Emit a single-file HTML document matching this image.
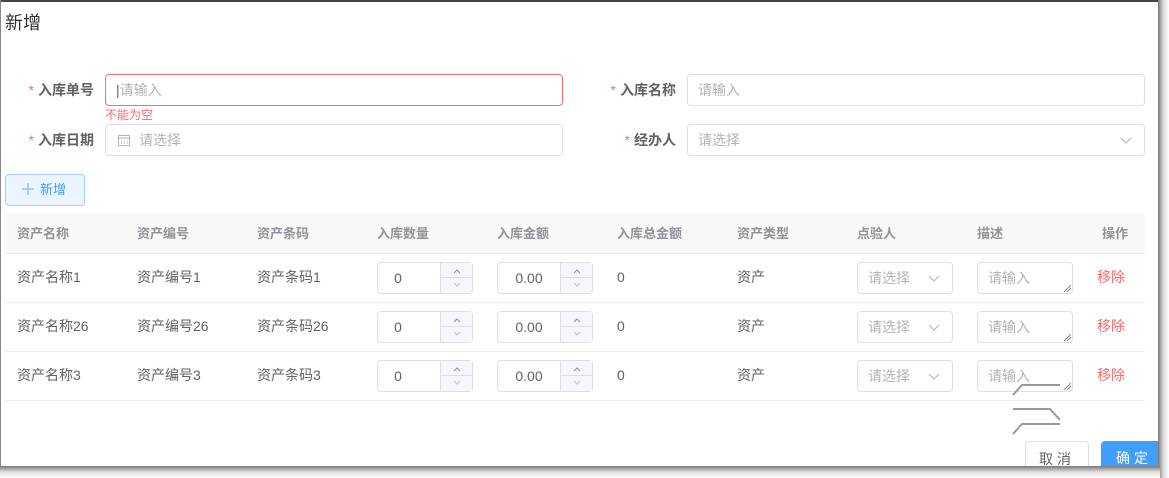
<!DOCTYPE html><html><head><meta charset="utf-8"><style>
*{box-sizing:border-box;margin:0;padding:0}
body{width:1169px;height:478px;background:#fff;font-family:"Liberation Sans","Noto Sans CJK SC",sans-serif;font-size:14px;color:#606266;position:relative;overflow:hidden}
.a{position:absolute}
.inp{position:absolute;border:1px solid #dcdfe6;border-radius:4px;background:#fff;color:#b0b3b9;font-size:14px;line-height:30px;padding-left:10px}
.lbl{position:absolute;font-weight:bold;color:#606266;text-align:right;line-height:32px}
.lbl b{color:#f56c6c;font-weight:normal;margin-right:4px}
.th{position:absolute;top:214px;height:39px;line-height:39px;font-weight:bold;font-size:13px;color:#909399}
.td{position:absolute;font-size:14px;color:#606266;line-height:49px}
.hl{position:absolute;left:5px;width:1140px;height:1px;background:#ebeef5}
.num{position:absolute;width:96px;height:32px;border:1px solid #dcdfe6;border-radius:4px;background:#fff}
.num span{position:absolute;left:0;width:62px;text-align:center;line-height:30px;color:#606266}
.num i{position:absolute;right:0;width:32px;height:15px;background:#f5f7fa;border-left:1px solid #dcdfe6}
.sel{position:absolute;width:96px;height:32px;border:1px solid #dcdfe6;border-radius:4px;color:#b0b3b9;line-height:30px;padding-left:10px}
.ta{position:absolute;width:96px;height:32px;border:1px solid #dcdfe6;border-radius:4px;color:#b0b3b9;line-height:30px;padding-left:10px}
.rm{position:absolute;color:#f56c6c;line-height:49px}
svg.c{position:absolute}
</style></head><body>
<div class="a" style="left:0;top:0;width:1169px;height:2px;background:#444"></div>
<div class="a" style="left:0;top:0;width:1px;height:478px;background:#888"></div>
<div class="a" style="left:5px;top:9px;font-size:18px;color:#303133">新增</div>

<div class="lbl" style="left:10px;top:74px;width:84px"><b>*</b>入库单号</div>
<div class="inp" style="left:105px;top:74px;width:458px;height:32px;border-color:#f56c6c"><span style="color:#606266">|</span>请输入</div>
<div class="a" style="left:105px;top:106px;font-size:12px;color:#f56c6c">不能为空</div>
<div class="lbl" style="left:592px;top:74px;width:84px"><b>*</b>入库名称</div>
<div class="inp" style="left:687px;top:74px;width:458px;height:32px">请输入</div>

<div class="lbl" style="left:10px;top:124px;width:84px"><b>*</b>入库日期</div>
<div class="inp" style="left:105px;top:124px;width:458px;height:32px;padding-left:12px"><svg width="12" height="12" style="margin-right:9px;vertical-align:-1px"><rect x="0.5" y="1.5" width="11" height="10" fill="none" stroke="#b0b3b9"/><line x1="0" y1="4" x2="12" y2="4" stroke="#b0b3b9"/><path d="M3 7h1M6 7h1M9 7h1M3 9h1M6 9h1M9 9h1" stroke="#b0b3b9"/></svg>请选择</div>
<div class="lbl" style="left:592px;top:124px;width:84px"><b>*</b>经办人</div>
<div class="inp" style="left:687px;top:124px;width:458px;height:32px">请选择<svg class="c" style="right:12px;top:12px" width="12" height="7"><path d="M1 1l5 5 5-5" stroke="#b0b3b9" fill="none"/></svg></div>

<div class="a" style="left:5px;top:174px;width:80px;height:32px;border:1px solid #a0cfff;border-radius:4px;background:#ecf5ff;color:#409eff;line-height:30px;font-size:13px;padding-left:16px"><svg width="12" height="12" style="margin-right:6px;vertical-align:-1px"><path d="M6 0v12M0 6h12" stroke="#8cc5ff" stroke-width="1.5"/></svg>新增</div>

<div class="a" style="left:5px;top:214px;width:1140px;height:39px;background:#f8f8f9"></div>
<div class="th" style="left:17px">资产名称</div><div class="th" style="left:137px">资产编号</div><div class="th" style="left:257px">资产条码</div><div class="th" style="left:377px">入库数量</div><div class="th" style="left:497px">入库金额</div><div class="th" style="left:617px">入库总金额</div><div class="th" style="left:737px">资产类型</div><div class="th" style="left:857px">点验人</div><div class="th" style="left:977px">描述</div><div class="th" style="left:1102px">操作</div>
<div class="hl" style="top:253px"></div><div class="hl" style="top:302px"></div><div class="hl" style="top:351px"></div><div class="hl" style="top:400px"></div>

<div class="td" style="left:17px;top:253px">资产名称1</div><div class="td" style="left:137px;top:253px">资产编号1</div><div class="td" style="left:257px;top:253px">资产条码1</div>
<div class="td" style="left:17px;top:302px">资产名称26</div><div class="td" style="left:137px;top:302px">资产编号26</div><div class="td" style="left:257px;top:302px">资产条码26</div>
<div class="td" style="left:17px;top:351px">资产名称3</div><div class="td" style="left:137px;top:351px">资产编号3</div><div class="td" style="left:257px;top:351px">资产条码3</div>

<div class="num" style="left:377px;top:262px"><span style="width:40px">0</span><i style="top:0;border-bottom:1px solid #dcdfe6"></i><i style="top:15px"></i><svg class="c" style="right:10px;top:5px" width="10" height="20"><path d="M2 5l3-3 3 3" stroke="#909399" fill="none"/><path d="M2 15l3 3 3-3" stroke="#c0c4cc" fill="none"/></svg></div>
<div class="num" style="left:497px;top:262px"><span>0.00</span><i style="top:0;border-bottom:1px solid #dcdfe6"></i><i style="top:15px"></i><svg class="c" style="right:10px;top:5px" width="10" height="20"><path d="M2 5l3-3 3 3" stroke="#909399" fill="none"/><path d="M2 15l3 3 3-3" stroke="#c0c4cc" fill="none"/></svg></div>
<div class="num" style="left:377px;top:311px"><span style="width:40px">0</span><i style="top:0;border-bottom:1px solid #dcdfe6"></i><i style="top:15px"></i><svg class="c" style="right:10px;top:5px" width="10" height="20"><path d="M2 5l3-3 3 3" stroke="#909399" fill="none"/><path d="M2 15l3 3 3-3" stroke="#c0c4cc" fill="none"/></svg></div>
<div class="num" style="left:497px;top:311px"><span>0.00</span><i style="top:0;border-bottom:1px solid #dcdfe6"></i><i style="top:15px"></i><svg class="c" style="right:10px;top:5px" width="10" height="20"><path d="M2 5l3-3 3 3" stroke="#909399" fill="none"/><path d="M2 15l3 3 3-3" stroke="#c0c4cc" fill="none"/></svg></div>
<div class="num" style="left:377px;top:360px"><span style="width:40px">0</span><i style="top:0;border-bottom:1px solid #dcdfe6"></i><i style="top:15px"></i><svg class="c" style="right:10px;top:5px" width="10" height="20"><path d="M2 5l3-3 3 3" stroke="#909399" fill="none"/><path d="M2 15l3 3 3-3" stroke="#c0c4cc" fill="none"/></svg></div>
<div class="num" style="left:497px;top:360px"><span>0.00</span><i style="top:0;border-bottom:1px solid #dcdfe6"></i><i style="top:15px"></i><svg class="c" style="right:10px;top:5px" width="10" height="20"><path d="M2 5l3-3 3 3" stroke="#909399" fill="none"/><path d="M2 15l3 3 3-3" stroke="#c0c4cc" fill="none"/></svg></div>

<div class="td" style="left:617px;top:253px">0</div><div class="td" style="left:617px;top:302px">0</div><div class="td" style="left:617px;top:351px">0</div>
<div class="td" style="left:737px;top:253px">资产</div><div class="td" style="left:737px;top:302px">资产</div><div class="td" style="left:737px;top:351px">资产</div>

<div class="sel" style="left:857px;top:262px">请选择<svg class="c" style="right:12px;top:12px" width="12" height="7"><path d="M1 1l5 5 5-5" stroke="#b0b3b9" fill="none"/></svg></div>
<div class="sel" style="left:857px;top:311px">请选择<svg class="c" style="right:12px;top:12px" width="12" height="7"><path d="M1 1l5 5 5-5" stroke="#b0b3b9" fill="none"/></svg></div>
<div class="sel" style="left:857px;top:360px">请选择<svg class="c" style="right:12px;top:12px" width="12" height="7"><path d="M1 1l5 5 5-5" stroke="#b0b3b9" fill="none"/></svg></div>
<div class="ta" style="left:977px;top:262px">请输入<svg class="c" style="right:1px;bottom:1px" width="7" height="7"><path d="M0 7L7 0M3 7L7 3" stroke="#888"/></svg></div>
<div class="ta" style="left:977px;top:311px">请输入<svg class="c" style="right:1px;bottom:1px" width="7" height="7"><path d="M0 7L7 0M3 7L7 3" stroke="#888"/></svg></div>
<div class="ta" style="left:977px;top:360px">请输入<svg class="c" style="right:1px;bottom:1px" width="7" height="7"><path d="M0 7L7 0M3 7L7 3" stroke="#888"/></svg></div>
<div class="rm" style="left:1097px;top:253px">移除</div><div class="rm" style="left:1097px;top:302px">移除</div><div class="rm" style="left:1097px;top:351px">移除</div>

<svg class="a" style="left:1010px;top:380px" width="50" height="60"><path d="M3 15 L12 5 H55 M3 29 H40 L50 40 M3 54 L12 44 H55" stroke="#999" stroke-width="2" fill="none"/></svg>

<div class="a" style="left:1025px;top:441px;width:64px;height:37px;border:1px solid #dcdfe6;border-radius:4px;text-align:center;line-height:34px;color:#606266;letter-spacing:4px;background:#fff">取消</div>
<div class="a" style="left:1101px;top:441px;width:64px;height:37px;background:#409eff;border-radius:4px;color:#fff;line-height:34px;padding-left:15px;letter-spacing:4px">确定</div>

<div class="a" style="left:1158px;top:0;width:11px;height:478px;background:linear-gradient(90deg,#777,#ddd 50%,#fff)"></div>
<div class="a" style="left:0;top:466px;width:1160px;height:12px;background:linear-gradient(180deg,#777,#ddd 50%,#fff)"></div>
</body></html>
